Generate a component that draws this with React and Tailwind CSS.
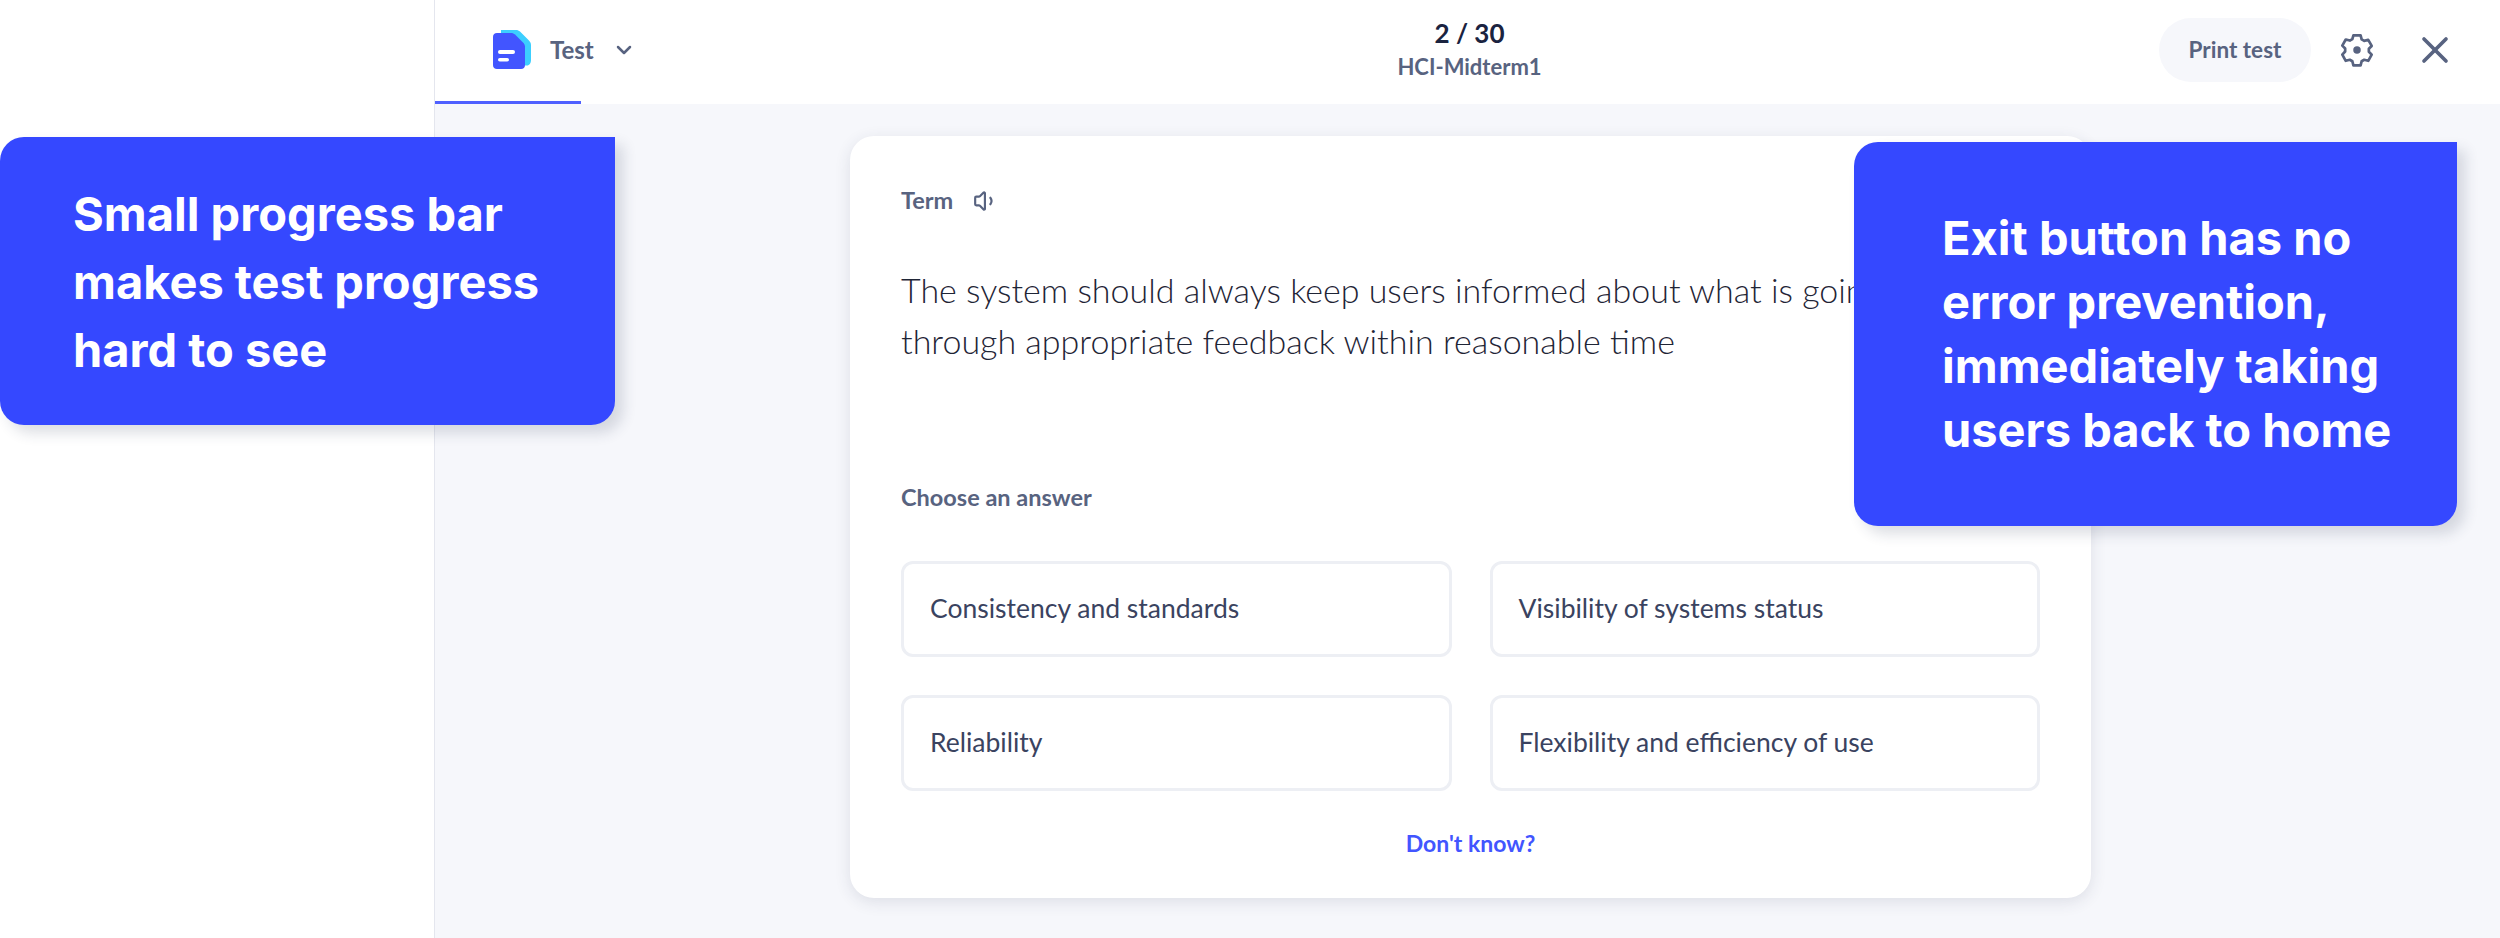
import React from 'react'
import { Volume1, X, ChevronDown } from 'lucide-react'

const answers = [
    'Consistency and standards',
    'Visibility of systems status',
    'Reliability',
    'Flexibility and efficiency of use',
]

const Logo = () => (
    <svg width="38" height="40" viewBox="0 0 38 40" fill="none">
        <path d="M8 0h15c1.500 0 3 .6 4 1.600l8.500 8.500c1.500 1.500 2.500 3 2.500 5v15c0 3-1.500 5.500-4 5.500H8z" fill="#3ccfff" />
        <path d="M4 3h14c1.500 0 3 .6 4 1.600l8 8c1 1 2 2.500 2 4V35c0 2.500-1.500 4-4 4H4c-2.500 0-4-1.500-4-4V7c0-2.500 1.500-4 4-4z" fill="#4255ff" />
        <rect x="5" y="20" width="17" height="4" rx="2" fill="#fff" />
        <rect x="5" y="28" width="11" height="3.500" rx="1.750" fill="#fff" />
    </svg>
)

const Gear = () => (
    <svg width="36" height="36" viewBox="0 0 24 24" fill="none" stroke="#586380" strokeWidth="1.800" strokeLinejoin="round">
        <path d="M9.600 2.200h4.800l.7 2.700 1.700 1 2.700-.7 2.300 4.100-1.900 1.900v2l1.900 1.900-2.300 4.100-2.700-.7-1.700 1-.7 2.700H9.600l-.7-2.700-1.700-1-2.700.7-2.300-4.100L4.100 13v-2L2.200 9.100l2.300-4.100 2.700.7 1.700-1z" />
        <circle cx="12" cy="12" r="2.500" fill="#586380" stroke="none" />
    </svg>
)

const Callout = ({ className, children }) => (
    <div className={`absolute bg-[#3548ff] text-white font-bold text-[47px] rounded-3xl rounded-tr-none shadow-[8px_8px_14px_rgba(40,50,80,0.16)] font-['Inter',sans-serif] ${className}`}>
        {children}
    </div>
)

export default function App() {
    return (
        <div className="relative flex h-[938px] w-full overflow-hidden bg-white font-['Lato',sans-serif]">
            <div className="w-[434px] shrink-0 border-r border-[#e4e6ee] box-content"></div>

            <div className="flex flex-1 flex-col bg-[#f6f7fb]">
                <div className="relative flex h-[104px] shrink-0 items-center bg-white pb-[5px]">
                    <div className="absolute bottom-0 left-0 h-[3px] w-[146px] bg-[#4f60ff]"></div>
                    <div className="flex w-[500px] items-center pl-[58px]">
                        <Logo />
                        <span className="ml-[19px] text-[24px] font-bold text-[#586380]">Test</span>
                        <ChevronDown className="ml-[18px] text-[#586380]" size={24} strokeWidth={2.500} />
                    </div>
                    <div className="flex flex-1 flex-col items-center pl-[4px]">
                        <span className="text-[26px] leading-[32px] font-bold text-[#1a2340]">2 / 30</span>
                        <span className="mt-[3px] text-[22px] leading-[30px] font-bold text-[#586380]">HCI-Midterm1</span>
                    </div>
                    <div className="flex w-[500px] items-center justify-end pr-[43px]">
                        <div className="flex h-[64px] w-[152px] items-center justify-center rounded-full bg-[#f6f7fb] text-[22.500px] font-bold text-[#586380]">Print test</div>
                        <div className="ml-[28px]"><Gear /></div>
                        <X className="ml-[38px] text-[#586380]" size={44} strokeWidth={2} />
                    </div>
                </div>

                <div className="ml-[415px] mt-[32px] h-[762px] w-[1241px] rounded-3xl bg-white px-[51px] pt-[51px] shadow-[0_4px_16px_rgba(40,50,80,0.12)]">
                    <div className="flex h-[28px] items-center gap-[20px]">
                        <span className="text-[23.500px] font-bold text-[#586380]">Term</span>
                        <Volume1 className="text-[#586380]" size={26} strokeWidth={2} />
                    </div>
                    <p className="mt-[49px] h-[219px] w-[1100px] text-[34px] leading-[51px] font-light text-[#1f2536]">
                        The system should always keep users informed about what is going on through appropriate feedback within reasonable time
                    </p>
                    <div className="text-[23.500px] leading-[28px] font-bold text-[#586380]">Choose an answer</div>
                    <div className="mt-[50px] grid grid-cols-2 gap-x-[38px] gap-y-[38px]">
                        {answers.map((a) => (
                            <div key={a} className="flex h-[96px] items-center rounded-xl border-[3px] border-[#edeff4] px-[26px] text-[26.500px] text-[#3a4360]">{a}</div>
                        ))}
                    </div>
                    <div className="mt-[35px] text-center text-[23px] font-bold text-[#4255ff]">Don't know?</div>
                </div>
            </div>

            <Callout className="left-0 top-[137px] h-[288px] w-[615px] pl-[73px] pt-[43px] leading-[68px]">
                Small progress bar<br />makes test progress<br />hard to see
            </Callout>
            <Callout className="left-[1854px] top-[142px] h-[384px] w-[603px] pl-[88px] pt-[64px] leading-[64px]">
                Exit button has no<br />error prevention,<br />immediately taking<br />users back to home
            </Callout>
        </div>
    )
}
